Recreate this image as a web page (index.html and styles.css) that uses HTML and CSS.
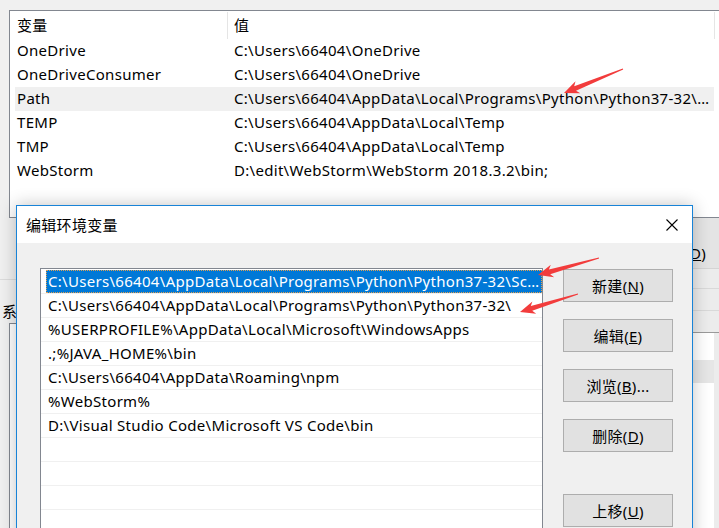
FILE: index.html
```html
<!DOCTYPE html>
<html lang="zh-CN">
<head>
<meta charset="utf-8">
<title>编辑环境变量</title>
<link rel="stylesheet" href="styles.css">
</head>
<body>
<div class="screen">
  <div class="bg">
    <div class="vars">
      <div class="vhead">
        <div class="vh vh1">变量</div>
        <div class="vh vh2">值</div>
      </div>
      <div class="vrow"><span class="c1">OneDrive</span><span class="c2">C:\Users\66404\OneDrive</span></div>
      <div class="vrow"><span class="c1">OneDriveConsumer</span><span class="c2">C:\Users\66404\OneDrive</span></div>
      <div class="vrow sel"><span class="c1">Path</span><span class="c2">C:\Users\66404\AppData\Local\Programs\Python\Python37-32\Scripts\;C:\Users\66404\AppData</span></div>
      <div class="vrow"><span class="c1">TEMP</span><span class="c2">C:\Users\66404\AppData\Local\Temp</span></div>
      <div class="vrow"><span class="c1">TMP</span><span class="c2">C:\Users\66404\AppData\Local\Temp</span></div>
      <div class="vrow"><span class="c1">WebStorm</span><span class="c2">D:\edit\WebStorm\WebStorm 2018.3.2\bin;</span></div>
    </div>
    <div class="lower">
      <div class="lstrip">
        <div class="lsep"></div>
        <div class="sys">系</div>
        <div class="sysbox"></div>
      </div>
      <div class="rstrip">
        <div class="rbtn"><span>删除(<u>D</u>)</span></div>
        <div class="rrow r1"></div>
        <div class="rrow r2"></div>
        <div class="rrow r3"></div>
        <div class="rlist">
          <div class="rband"></div>
        </div>
      </div>
    </div>
  </div>

  <div class="dialog">
    <div class="dtitle">
      <span class="dname">编辑环境变量</span>
      <svg class="close" width="12" height="12" viewBox="0 0 12 12"><path d="M0.5 0.5 L11.5 11.5 M11.5 0.5 L0.5 11.5" stroke="#000" stroke-width="1.1" fill="none"/></svg>
    </div>
    <div class="dbody">
      <div class="plist">
        <div class="prow"><span class="pt selected">C:\Users\66404\AppData\Local\Programs\Python\Python37-32\Scripts\</span></div>
        <div class="prow"><span class="pt">C:\Users\66404\AppData\Local\Programs\Python\Python37-32\</span></div>
        <div class="prow"><span class="pt">%USERPROFILE%\AppData\Local\Microsoft\WindowsApps</span></div>
        <div class="prow"><span class="pt">.;%JAVA_HOME%\bin</span></div>
        <div class="prow"><span class="pt">C:\Users\66404\AppData\Roaming\npm</span></div>
        <div class="prow"><span class="pt">%WebStorm%</span></div>
        <div class="prow"><span class="pt">D:\Visual Studio Code\Microsoft VS Code\bin</span></div>
        <div class="prow"><span class="pt"></span></div>
        <div class="prow"><span class="pt"></span></div>
        <div class="prow"><span class="pt"></span></div>
        <div class="prow"><span class="pt"></span></div>
      </div>
      <div class="btns">
        <div class="btn">新建(<u>N</u>)</div>
        <div class="btn">编辑(<u>E</u>)</div>
        <div class="btn">浏览(<u>B</u>)...</div>
        <div class="btn">删除(<u>D</u>)</div>
        <div class="btn up">上移(<u>U</u>)</div>
      </div>
    </div>
  </div>

  <svg class="arrows" width="719" height="528" viewBox="0 0 719 528">
    <polygon fill="#f23c3c" points="623.2,69.5 576.0,90.8 580.3,93.3 564,93 575.5,81.3 574.2,86.2 622.8,68.5"/>
    <polygon fill="#f23c3c" points="599.1,258.5 550.2,274.2 554.2,277.3 538,275 550.8,264.7 548.9,269.4 598.9,257.5"/>
    <polygon fill="#f23c3c" points="578.1,294.5 532.2,310.8 536.2,313.8 520,312 532.4,301.4 530.8,306.0 577.9,293.5"/>
  </svg>
</div>
</body>
</html>
```

FILE: styles.css
```css
* { box-sizing: border-box; }

html, body {
  margin: 0;
  padding: 0;
  background: #f0f0f0;
}

body {
  font-family: "Noto Sans", "Noto Sans CJK SC", sans-serif;
  font-size: 15px;
  letter-spacing: 0.3px;
  color: #000;
}

.screen {
  position: relative;
  width: 719px;
  height: 528px;
  overflow: hidden;
  background: #f0f0f0;
}

/* ---------- background window ---------- */
.bg {
  display: flex;
  flex-direction: column;
  height: 528px;
}

.vars {
  margin: 10px 0 0 9px;
  width: 730px;
  height: 208px;
  flex: none;
  border: 1px solid #828790;
  border-right: none;
  background: #fff;
  padding: 0 0 0 5px;
}

.vhead {
  display: flex;
  height: 28px;
  padding-top: 1px;
}

.vh {
  height: 27px;
  line-height: 27px;
  white-space: nowrap;
}

.vh1 {
  width: 213px;
  padding-left: 2px;
  border-right: 1px solid #e5e5e5;
}

.vh2 {
  width: 487px;
  padding-left: 6px;
  border-right: 1px solid #e5e5e5;
}

.vrow {
  display: flex;
  width: 699px;
  height: 24px;
  line-height: 23px;
  white-space: nowrap;
}

.vrow.sel { background: #f0f0f0; }

.vrow .c1 {
  width: 219px;
  flex: none;
  padding-left: 2px;
}

.vrow .c2 {
  flex: 1;
  min-width: 0;
  overflow: hidden;
  text-overflow: ellipsis;
  padding-right: 2px;
}

.lower {
  flex: 1;
  display: flex;
  justify-content: space-between;
}

.lstrip {
  width: 16px;
  display: flex;
  flex-direction: column;
  overflow: hidden;
}

.lsep {
  height: 62px;
  border-bottom: 1px solid #dcdcdc;
  flex: none;
}

.sys {
  height: 43px;
  padding: 19px 0 0 2px;
  line-height: 24px;
  white-space: nowrap;
  flex: none;
}

.sysbox {
  flex: 1;
  margin-left: 9px;
  border-top: 1px solid #828790;
  border-left: 1px solid #828790;
  background: #fff;
}

.rstrip {
  width: 30px;
  display: flex;
  flex-direction: column;
  overflow: hidden;
}

.rbtn {
  height: 51px;
  flex: none;
  display: flex;
  justify-content: flex-end;
  align-items: center;
  padding: 18px 13px 0 0;
  background: #e4e4e4;
  border-bottom: 1px solid #d4d4d4;
  white-space: nowrap;
}

.rrow {
  flex: none;
  background: #ececec;
  border-bottom: 1px solid #d9d9d9;
}

.r1 { height: 20px; }
.r2 { height: 22px; }
.r3 { height: 22px; border-bottom-color: #9a9a9a; }

.rlist {
  flex: 1;
  background: #fff;
  border-right: 5px solid #ececec;
  padding-top: 27px;
}

.rband {
  height: 23px;
  background: #e6e6e6;
}

/* ---------- dialog ---------- */
.dialog {
  position: absolute;
  left: 16px;
  top: 205px;
  width: 677px;
  height: 360px;
  border: 1px solid #1883d7;
  background: #f0f0f0;
  box-shadow: 0 0 16px rgba(0, 0, 0, 0.24);
}

.dtitle {
  height: 37px;
  background: #fff;
  display: flex;
  align-items: center;
  padding: 0 14px 0 9px;
}

.dname { flex: 1; }

.close { display: block; }

.dbody {
  display: flex;
  gap: 20px;
  padding: 25px 0 0 23px;
}

.plist {
  width: 503px;
  height: 300px;
  flex: none;
  border: 1px solid #828790;
  background: #fff;
  padding-top: 1px;
  overflow: hidden;
}

.prow {
  height: 24px;
  border-bottom: 1px solid #f0f0f0;
  padding-left: 5px;
  display: flex;
}

.pt {
  display: block;
  flex: 1;
  min-width: 0;
  height: 23px;
  line-height: 23px;
  padding: 0 2px;
  white-space: nowrap;
  overflow: hidden;
  text-overflow: ellipsis;
}

.pt.selected {
  background: #0078d7;
  color: #fff;
  outline: 1px dotted #e0a050;
  outline-offset: -1px;
}

.btns {
  display: flex;
  flex-direction: column;
  gap: 17px;
  padding-top: 1px;
}

.btn {
  width: 110px;
  height: 33px;
  border: 1px solid #adadad;
  background: #e1e1e1;
  display: flex;
  align-items: center;
  justify-content: center;
  white-space: nowrap;
}

.btn.up { margin-top: 25px; }

/* ---------- annotation arrows ---------- */
.arrows {
  position: absolute;
  left: 0;
  top: 0;
  pointer-events: none;
}
```
